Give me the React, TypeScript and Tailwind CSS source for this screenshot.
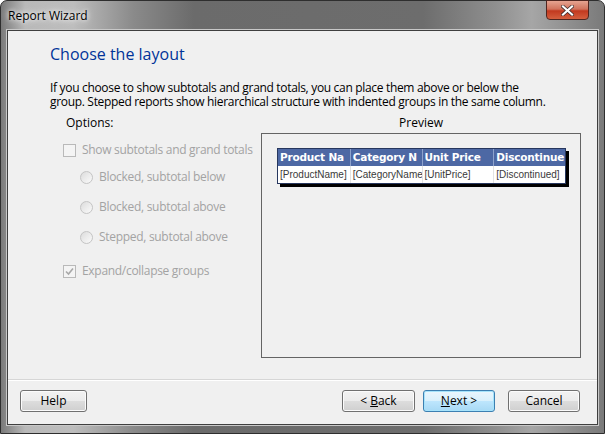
import React from "react"

const ui = { fontFamily: '"Open Sans", "Noto Sans", sans-serif' }

function Button({ children, primary, className }: { children: React.ReactNode; primary?: boolean; className?: string }) {
  return (
    <div
      className={`flex h-[22px] items-center justify-center rounded-[3px] border text-[12px] text-black ${
        primary ? "border-[#3c7fb1] shadow-[inset_0_0_0_1px_#a6e3fb]" : "border-[#707070] shadow-[inset_0_0_0_1px_#fbfbfb]"
      } ${className ?? ""}`}
      style={{
        background: primary
          ? "linear-gradient(#eaf6fd 0%, #d9f0fc 50%, #bee6fd 50%, #a7d9f5 100%)"
          : "linear-gradient(#f2f2f2 0%, #ebebeb 50%, #dddddd 50%, #cfcfcf 100%)",
      }}
    >
      {children}
    </div>
  )
}

function Radio({ label }: { label: string }) {
  return (
    <div className="flex h-[30px] items-center pl-[17px]">
      <span className="h-[13px] w-[13px] shrink-0 rounded-full border border-[#c4c4c4] bg-gradient-to-br from-[#dcdcdc] to-[#fbfbfb]" />
      <span className="ml-[6px] whitespace-nowrap text-[12px] tracking-[-0.3px] text-[#a3a3a3]">{label}</span>
    </div>
  )
}

function Check({ label, checked, className }: { label: string; checked?: boolean; className?: string }) {
  return (
    <div className={`flex items-center ${className ?? ""}`}>
      <span className="flex h-[13px] w-[13px] shrink-0 items-center justify-center border border-[#b9b9b9] bg-[#f4f4f4]">
        {checked && (
          <svg width="9" height="9" viewBox="0 0 9 9">
            <path d="M1 4.5 L3.5 7 L8 1.5" fill="none" stroke="#a8a8a8" strokeWidth="1.6" />
          </svg>
        )}
      </span>
      <span className="ml-[6px] whitespace-nowrap text-[12px] tracking-[-0.3px] text-[#a3a3a3]">{label}</span>
    </div>
  )
}

const cols = [
  { head: "Product Na", cell: "[ProductName]" },
  { head: "Category N", cell: "[CategoryName]" },
  { head: "Unit Price", cell: "[UnitPrice]" },
  { head: "Discontinue", cell: "[Discontinued]" },
]

export default function App() {
  return (
    <div className="h-[434px] w-[605px] bg-white" style={ui}>
      <div
        className="flex h-[434px] w-[605px] flex-col rounded-t-[7px] border border-[#2e2e2e]"
        style={{
          background:
            "linear-gradient(90deg, #7a7a7a 0%, #b9b9b9 4%, #bdbdbd 12%, #8a8a8a 22%, #6b6b6b 32%, #6d6d6d 70%, #8f8f8f 82%, #a6a6a6 88%, #7a7a7a 100%)",
        }}
      >
        <div className="relative flex h-[29px] shrink-0 items-center pl-[7px]">
          <span className="text-[12px] text-black [text-shadow:0_0_8px_#ffffff,0_0_4px_#ffffff]">Report Wizard</span>
          <div
            className="absolute right-[15px] top-[-1px] flex h-[20px] w-[43px] items-center justify-center rounded-b-[4px] border border-[#4f2620]"
            style={{ background: "linear-gradient(#e6a491 0%, #d1735d 45%, #c2391f 55%, #d45f3e 100%)" }}
          >
            <svg width="13" height="11" viewBox="0 0 13 11">
              <path d="M2 1.5 L11 9.5 M11 1.5 L2 9.5" stroke="#3a2a2a" strokeWidth="3.6" strokeLinecap="square" />
              <path d="M2 1.5 L11 9.5 M11 1.5 L2 9.5" stroke="#ffffff" strokeWidth="2.2" strokeLinecap="square" />
            </svg>
          </div>
        </div>

        <div className="mx-[6px] mb-[8px] flex flex-1 flex-col border border-[#3f3f3f] bg-[#f0f0f0] shadow-[0_0_0_1px_#c8c8c8]">
          <div className="flex-1 pl-[42px]">
            <div className="pt-[13px] text-[16px] leading-[20px] text-[#003399]">Choose the layout</div>
            <div className="mt-[17px] whitespace-nowrap text-[12px] leading-[14px] tracking-[-0.32px] text-black">
              If you choose to show subtotals and grand totals, you can place them above or below the
              <br />
              group. Stepped reports show hierarchical structure with indented groups in the same column.
            </div>

            <div className="mt-[6px] flex">
              <div className="w-[211px] pl-[13px]">
                <div className="pl-[3px] text-[12px] leading-[16px] text-black">Options:</div>
                <Check className="mt-[7px] h-[24px]" label="Show subtotals and grand totals" />
                <Radio label="Blocked, subtotal below" />
                <Radio label="Blocked, subtotal above" />
                <Radio label="Stepped, subtotal above" />
                <Check className="mt-[4px] h-[30px]" label="Expand/collapse groups" checked />
              </div>

              <div className="flex w-[320px] flex-col">
                <div className="text-center text-[12px] leading-[16px] text-black">Preview</div>
                <div className="mt-[2px] h-[225px] border border-[#646464] pl-[15px] pt-[14px]">
                  <div className="flex w-[289px] flex-col border border-[#27375e] bg-white shadow-[3px_3px_0_#000000]">
                    <div className="flex h-[17px] bg-[#4d68a4]">
                      {cols.map((c, i) => (
                        <div
                          key={c.head}
                          className={`flex w-[72px] items-center overflow-hidden whitespace-nowrap pl-[2px] font-bold tracking-[-0.2px] text-white ${
                            i > 0 ? "border-l border-[#8ea2cc]" : ""
                          }`}
                          style={{ fontFamily: '"DejaVu Sans", sans-serif', fontSize: "10.5px" }}
                        >
                          {c.head}
                        </div>
                      ))}
                    </div>
                    <div className="flex h-[17px]">
                      {cols.map((c, i) => (
                        <div
                          key={c.cell}
                          className={`flex w-[72px] items-center overflow-hidden whitespace-nowrap pl-[2px] text-[10px] text-[#3a3a3a] ${
                            i > 0 ? "border-l border-[#e2e2e2]" : ""
                          }`}
                          style={{ fontFamily: '"Liberation Sans", sans-serif' }}
                        >
                          {c.cell}
                        </div>
                      ))}
                    </div>
                  </div>
                </div>
              </div>
            </div>
          </div>

          <div className="flex h-[45px] shrink-0 items-start border-t border-[#d6d6d6] pl-[12px] pr-[17px] pt-[10px] shadow-[inset_0_1px_0_#ffffff]">
            <Button className="w-[67px]">Help</Button>
            <div className="flex-1" />
            <Button className="w-[73px]">
              &lt; <span className="ml-[3px] underline">B</span>ack
            </Button>
            <Button primary className="ml-[8px] w-[72px]">
              <span className="underline">N</span>ext &gt;
            </Button>
            <Button className="ml-[13px] w-[72px]">Cancel</Button>
          </div>
        </div>
      </div>
    </div>
  )
}
